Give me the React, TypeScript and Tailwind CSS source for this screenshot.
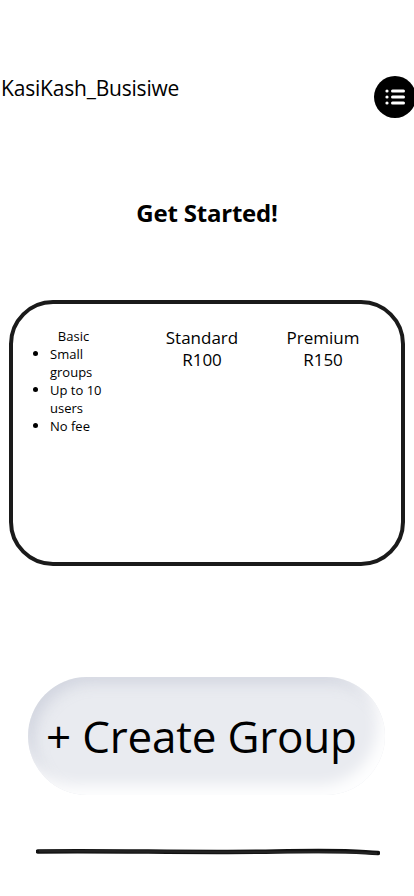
export default function App() {
  return (
    <div className="relative w-[414px] h-[896px] bg-white overflow-hidden text-black font-['Open_Sans',sans-serif]">
      {/* Header */}
      <div className="flex items-start justify-between pt-[74px]">
        <span className="pl-[1px] text-[21px] leading-[28px] tracking-[-0.2px]">KasiKash_Busisiwe</span>
        <div className="mt-[2px] mr-[-2px] w-[42px] h-[42px] rounded-full bg-black flex items-center justify-center">
          <svg width="24" height="24" viewBox="0 0 24 24" fill="none">
            <circle cx="4" cy="6" r="1.6" fill="white" />
            <circle cx="4" cy="12" r="1.6" fill="white" />
            <circle cx="4" cy="18" r="1.6" fill="white" />
            <rect x="8" y="4.5" width="14" height="3" rx="1.5" fill="white" />
            <rect x="8" y="10.5" width="14" height="3" rx="1.5" fill="white" />
            <rect x="8" y="16.5" width="14" height="3" rx="1.5" fill="white" />
          </svg>
        </div>
      </div>

      <h1 className="mt-[79px] text-center text-[24px] leading-[31px] font-bold tracking-[-0.2px]">Get Started!</h1>

      {/* Plans card */}
      <div className="mt-[72px] mx-[9px] h-[266px] border-[4px] border-[#1a1a1a] rounded-[44px] pt-[23px] flex">
        <div className="ml-[22px] w-[77px]">
          <p className="text-center text-[13px] leading-[18px]">Basic</p>
          <ul className="list-disc pl-[15px] text-[13px] leading-[18px] marker:text-[14px]">
            <li>Small groups</li>
            <li>Up to 10 users</li>
            <li>No fee</li>
          </ul>
        </div>
        <div className="ml-[40px] w-[100px] text-center text-[17px] leading-[22px]">
          <p>Standard</p>
          <p>R100</p>
        </div>
        <div className="ml-[21px] w-[100px] text-center text-[17px] leading-[22px]">
          <p>Premium</p>
          <p>R150</p>
        </div>
      </div>

      {/* Create group button */}
      <div className="mt-[111px] ml-[28px] w-[357px] h-[118px] rounded-full bg-[#e9ebf0] shadow-[inset_-8px_-10px_14px_rgba(255,255,255,0.95),inset_6px_6px_14px_rgba(170,176,195,0.35)] flex items-center pl-[18px]">
        <span className="text-[44px] leading-none tracking-[-0.2px]">+ Create Group</span>
      </div>

      {/* Scribbled line */}
      <svg className="mt-[52px] ml-[36px]" width="344" height="10" viewBox="0 0 344 10">
        <path d="M2 4.5 C 80 3.5, 160 6, 240 4.5 S 320 5, 342 6" stroke="#111" strokeWidth="4.5" strokeLinecap="round" fill="none" />
        <path d="M4 4 C 90 3.5, 170 5.5, 250 5 S 320 5.5, 340 6.5" stroke="#2a2a2a" strokeWidth="2.5" strokeLinecap="round" fill="none" opacity="0.7" />
      </svg>
    </div>
  );
}
